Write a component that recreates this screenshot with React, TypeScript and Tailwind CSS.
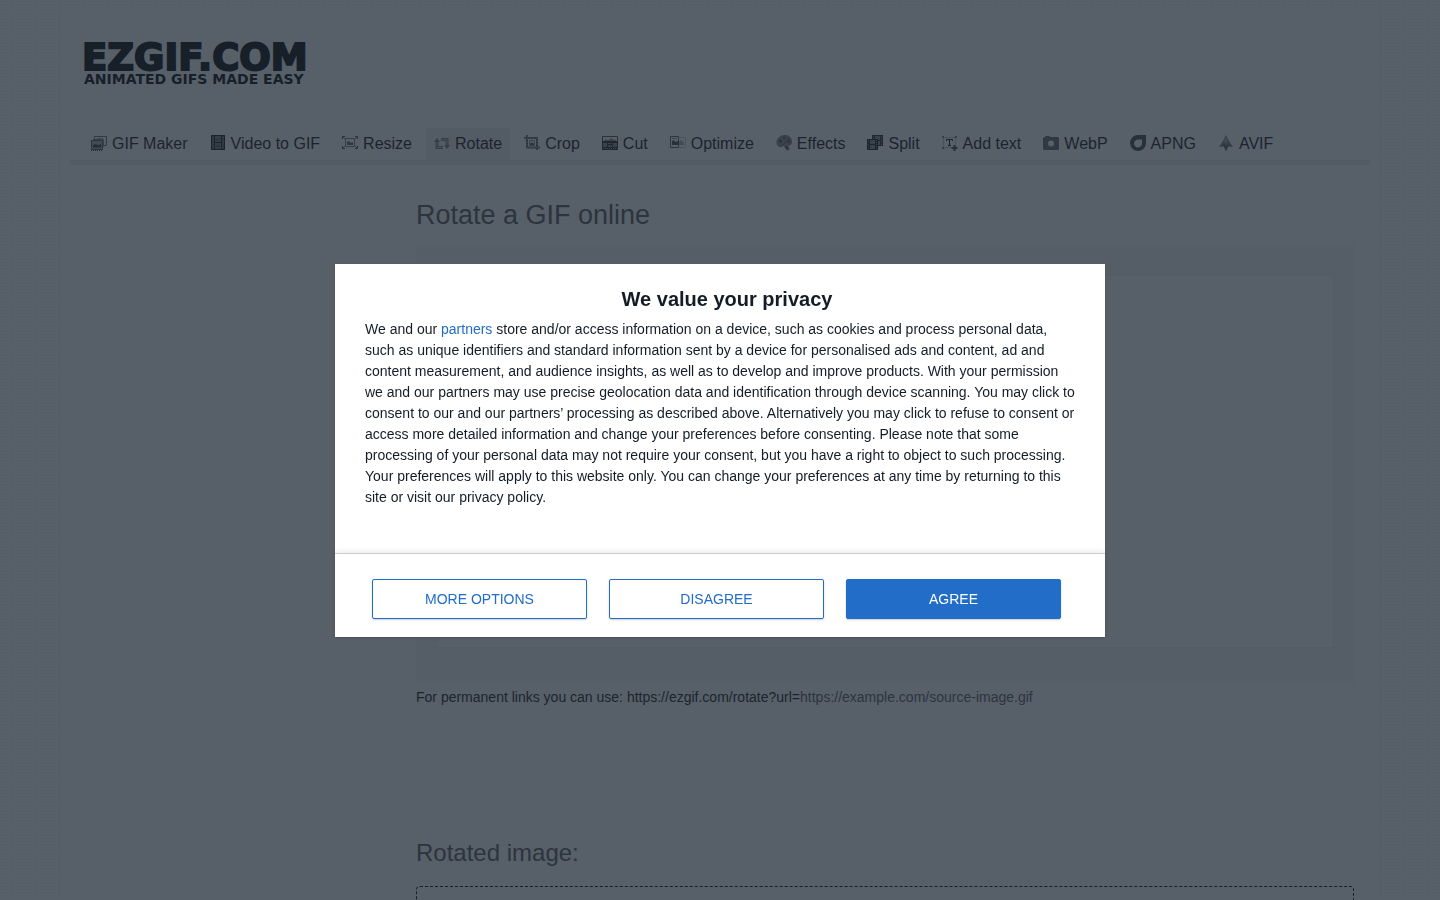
import type { ReactNode } from 'react';

function Icon({ children }: { children: ReactNode }) {
  return (
    <svg
      className="mb-0.5 w-4 h-4 shrink-0"
      viewBox="0 0 16 16"
      fill="none"
      stroke="#555"
      strokeWidth="1"
      aria-hidden="true"
    >
      {children}
    </svg>
  );
}

const navItems = [
  {
    label: 'GIF Maker',
    icon: (
      <Icon>
        <path d="M3.500 4V1.500H15.500V10.500H13" stroke="#666" />
        <path d="M0.500 5.500H11.500V14.500H0.500Z" fill="#aaa" stroke="#555" />
        <path d="M12.500 12V4.500H2" stroke="#888" />
        <path d="M2 12.500V10L5 9L7 10.500L10 9V12.500Z" fill="#333" stroke="none" />
        <path d="M6 3.500H12" stroke="#999" />
        <path d="M0 15.500H12" stroke="#444" strokeDasharray="1 1" />
      </Icon>
    ),
  },
  {
    label: 'Video to GIF',
    icon: (
      <Icon>
        <path d="M1 0H15V15H1Z" fill="#777" stroke="none" />
        <path d="M1.500 0V15M14.500 0V15M4.500 0V15M11.500 0V15M1 0.500H15M1 14.500H15M4 7.500H12" stroke="#111" />
        <path d="M3 1V15M13 1V15" stroke="#222" strokeDasharray="1 1" />
        <path d="M6 5.500L8 4L10 3M6 10.500H10M7 12.500L9 11.500" stroke="#444" />
      </Icon>
    ),
  },
  {
    label: 'Resize',
    icon: (
      <Icon>
        <path d="M0.500 4V1.500H3M13 1.500H15.500V4M15.500 11V13.500H13M3 13.500H0.500V11" stroke="#444" />
        <path d="M1 2L3 4M15 2L13 4M1 13L3 11M15 13L13 11" stroke="#777" />
        <path d="M3.500 3.500H12.500V11.500H3.500Z" stroke="#777" />
        <path d="M5 10V7L7 6L9 8L11 7V10Z" fill="#666" stroke="none" />
      </Icon>
    ),
  },
  {
    label: 'Rotate',
    active: true,
    icon: (
      <Icon>
        <path d="M3 6V12.500H9M13 11V4.500H7" stroke="#777" strokeWidth="3" />
        <path d="M3 6V12.500H9M13 11V4.500H7" stroke="#bbb" />
        <path d="M0 7L3 3L6 7ZM10 10L13 14L16 10Z" fill="#777" stroke="none" />
      </Icon>
    ),
  },
  {
    label: 'Crop',
    icon: (
      <Icon>
        <path d="M0 3H13V15M3 0V12.500H16" stroke="#555" strokeWidth="2" />
        <path d="M0 3H13V15M3 0V12.500H16" stroke="#999" strokeWidth="1" strokeDasharray="2 1" />
        <path d="M5.500 5.500H10.500V10.500H5.500Z" stroke="#888" />
        <path d="M6 10V8.500L8 7L10 9V10Z" fill="#555" stroke="none" />
      </Icon>
    ),
  },
  {
    label: 'Cut',
    icon: (
      <Icon>
        <path d="M0.500 1.500H15.500V6.500H0.500Z" stroke="#444" />
        <path d="M0 6H16V15H0Z" fill="#222" stroke="none" />
        <path d="M1 8H5V12H1ZM6 8H10V12H6ZM11 8H15V12H11Z" fill="#888" stroke="none" />
        <path d="M2 6L4 4L6 5.500L9 3L12 5L14 4.500V6H2Z" fill="#888" stroke="none" />
        <path d="M1 13.500H16" stroke="#999" strokeDasharray="1 1" />
        <path d="M5 9.500H11" stroke="#222" />
      </Icon>
    ),
  },
  {
    label: 'Optimize',
    icon: (
      <Icon>
        <path d="M0.500 1.500H8.500V12.500H0.500Z" stroke="#555" />
        <path d="M8.500 2.500H15.500V12.500H8.500" stroke="#ccc" />
        <path d="M2 10V6L4 5L5.500 7L8 6V10Z" fill="#444" stroke="none" />
        <path d="M9 10V6.500L11 5L14 8V10Z" fill="#aaa" stroke="none" />
        <path d="M2 3.500H7" stroke="#999" />
      </Icon>
    ),
  },
  {
    label: 'Effects',
    icon: (
      <Icon>
        <path
          d="M1 7C1 3 5 0.500 9 0.500C13 0.500 15.500 3 15.500 7C15.500 9 15 10 13 10C11 10 12 12 13 13C14 15 11 16 10 14C9 12 7 9 5 11C3 13 1 10 1 7Z"
          fill="#888"
          stroke="#777"
        />
        <path d="M5 12L14 3" stroke="#555" />
        <circle cx="4.500" cy="6" r="1.500" fill="#444" stroke="none" />
        <circle cx="8" cy="3" r="1.300" fill="#555" stroke="none" />
        <circle cx="12.500" cy="6.500" r="1.500" fill="#555" stroke="none" />
        <circle cx="11" cy="12.500" r="1.200" fill="#444" stroke="none" />
      </Icon>
    ),
  },
  {
    label: 'Split',
    icon: (
      <Icon>
        <path d="M5 0H16V11H5Z" fill="#222" stroke="none" />
        <path d="M8 1H13V5H8ZM8 6H13V10H8Z" fill="#888" stroke="none" />
        <path d="M6.500 1V11M14.500 1V11" stroke="#999" strokeDasharray="1 1" />
        <path d="M0 4H11V15H0Z" fill="#111" stroke="none" />
        <path d="M3 5H8V9H3ZM3 10H8V14H3Z" fill="#888" stroke="none" />
        <path d="M1.500 5V15M9.500 5V15" stroke="#999" strokeDasharray="1 1" />
      </Icon>
    ),
  },
  {
    label: 'Add text',
    icon: (
      <Icon>
        <path d="M1.500 2.500H13.500V12.500H1.500Z" stroke="#888" strokeDasharray="1 1" />
        <path d="M0 1H2V3H0ZM13 1H15V3H13ZM0 12H2V14H0Z" fill="#777" stroke="none" />
        <path d="M4.500 6V4.500H10.500V6M7.500 4.500V10.500M6 10.500H9" stroke="#111" />
        <path d="M12.500 10V16M9.500 13H15.500" stroke="#444" strokeWidth="2" />
      </Icon>
    ),
  },
  {
    label: 'WebP',
    icon: (
      <Icon>
        <path
          d="M2 2L3 1H6L7 2H14.500Q16 2 16 3.500V13.500Q16 15 14.500 15H1.500Q0 15 0 13.500V3.500Q0 2 2 2Z"
          fill="#666"
          stroke="none"
        />
        <circle cx="8" cy="8.500" r="3" fill="#fff" stroke="none" />
      </Icon>
    ),
  },
  {
    label: 'APNG',
    icon: (
      <Icon>
        <path
          d="M8 0H16V8A8 8 0 1 1 8 0ZM8.500 4.500A4 4 0 1 0 12 8V4.500Z"
          fill="#444"
          fillRule="evenodd"
          stroke="none"
        />
      </Icon>
    ),
  },
  {
    label: 'AVIF',
    icon: (
      <Icon>
        <path d="M8 0L11 6L15 12L10 11.500L8 16L6 11.500L1 12L5 6Z" fill="#777" stroke="none" />
        <path d="M8 2L10 6L8 9L6 6Z" fill="#aaa" stroke="none" />
        <path d="M5 8L8 11L11 8L10 12L8 16L6 12Z" fill="#555" stroke="none" />
      </Icon>
    ),
  },
];

function Logo() {
  return (
    <a href="/" className="block w-fit pb-1 pl-3 text-black font-['DejaVu_Sans',sans-serif] font-bold">
      <span className="block text-[37px] leading-8 [-webkit-text-stroke:2px_black]">EZGIF.COM</span>
      <span className="block pl-0.5 text-sm leading-[10px]">ANIMATED GIFS MADE EASY</span>
    </a>
  );
}

function Nav() {
  return (
    <nav className="mt-10 border-b-[5px] border-[#f0f0f0] pl-[13px]">
      <ul className="flex gap-1.5">
        {navItems.map((item) => (
          <li key={item.label}>
            <a
              href="#"
              className={
                item.active
                  ? 'flex h-8 items-center gap-[5px] bg-[#f0f0f0] px-2 text-base text-[#111]'
                  : 'flex h-8 items-center gap-[5px] px-2 text-base text-[#111]'
              }
            >
              {item.icon}
              <span className="whitespace-nowrap">{item.label}</span>
            </a>
          </li>
        ))}
      </ul>
    </nav>
  );
}

function ConsentDialog() {
  return (
    <div className="fixed inset-0 flex items-center justify-center bg-[#1f2a37]/75">
      <div
        role="dialog"
        aria-modal="true"
        aria-labelledby="consent-title"
        className="w-[770px] max-w-full bg-white text-[#141c26] shadow-sm"
      >
        <div className="pt-5 pr-4 pb-[45px] pl-[30px]">
          <h2 id="consent-title" className="text-center text-xl leading-[30px] font-bold">
            We value your privacy
          </h2>
          <p className="mt-[5px] pr-3 text-sm leading-[21px]">
            We and our <a href="#" className="text-[#216dc7]">partners</a> store and/or access
            information on a device, such as cookies and process personal data, such as unique
            identifiers and standard information sent by a device for personalised ads and content,
            ad and content measurement, and audience insights, as well as to develop and improve
            products. With your permission we and our partners may use precise geolocation data and
            identification through device scanning. You may click to consent to our and our
            partners’ processing as described above. Alternatively you may click to refuse to
            consent or access more detailed information and change your preferences before
            consenting. Please note that some processing of your personal data may not require your
            consent, but you have a right to object to such processing. Your preferences will apply
            to this website only. You can change your preferences at any time by returning to this
            site or visit our privacy policy.
          </p>
        </div>
        <div className="flex gap-[22px] border-t border-[#ccc] pt-[25px] pr-11 pb-[18px] pl-[37px] shadow-[0_-2px_5px_rgba(0,0,0,0.08)]">
          <button className="h-10 flex-1 rounded-xs border border-[#216dc7] text-sm text-[#216dc7] shadow-[0_1px_2px_rgba(0,0,0,0.2)]">
            MORE OPTIONS
          </button>
          <button className="h-10 flex-1 rounded-xs border border-[#216dc7] text-sm text-[#216dc7] shadow-[0_1px_2px_rgba(0,0,0,0.2)]">
            DISAGREE
          </button>
          <button className="h-10 flex-1 rounded-xs border border-[#216dc7] bg-[#216dc7] text-sm text-white shadow-[0_1px_2px_rgba(0,0,0,0.2)]">
            AGREE
          </button>
        </div>
      </div>
    </div>
  );
}

export default function App() {
  return (
    <div className="h-screen overflow-hidden bg-white bg-[radial-gradient(#ececec_1px,transparent_1px)] bg-[size:3px_3px] pt-2 font-['Liberation_Sans',sans-serif]">
      <div className="mx-auto min-h-screen max-w-[1322px] border border-[#f9f9f9] bg-white px-2.5 pt-[33px]">
        <header>
          <Logo />
          <Nav />
        </header>
        <div className="flex">
          <aside className="w-[346px] shrink-0" />
          <main className="flex-1 pt-8 pr-4">
            <h1 className="text-[27px] leading-9 text-[#555]">Rotate a GIF online</h1>
            <section className="mt-3 bg-[#f8f8f8] px-5 pt-[30px] pb-[35px]">
              <div className="h-[373px] border border-[#f0f0f0] bg-[#fdfdfd]" />
            </section>
            <p className="mt-1 text-sm leading-5 text-[#111]">
              For permanent links you can use: https://ezgif.com/rotate?url=
              <span className="text-[#555]">https://example.com/source-image.gif</span>
            </p>
            <h2 className="mt-[130px] text-2xl leading-8 text-[#555]">Rotated image:</h2>
            <div className="mt-[17px] h-40 rounded-sm border border-dashed border-black" />
          </main>
        </div>
      </div>
      <ConsentDialog />
    </div>
  );
}
